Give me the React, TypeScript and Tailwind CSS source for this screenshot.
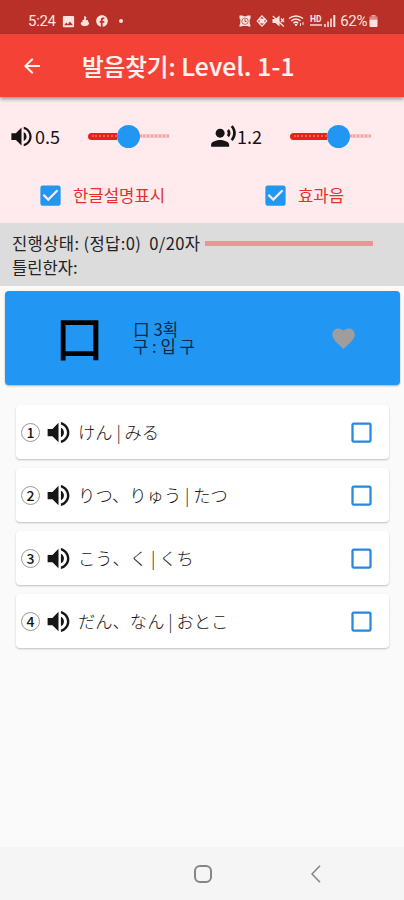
import {
  MdArrowBack,
  MdCheckBox,
  MdCheckBoxOutlineBlank,
  MdFacebook,
  MdFavorite,
  MdImage,
  MdRecordVoiceOver,
  MdVolumeUp,
} from 'react-icons/md';

const answers = [
  { id: 1, reading: 'けん | みる' },
  { id: 2, reading: 'りつ、りゅう | たつ' },
  { id: 3, reading: 'こう、く | くち' },
  { id: 4, reading: 'だん、なん | おとこ' },
];

function StatusBar() {
  return (
    <div className="flex h-[34px] items-center bg-[#b93029] pt-[8px] pr-[26px] pl-[28px] text-[#ffe3df]">
      <span className="w-[33px] font-['Roboto',sans-serif] text-[15px] leading-none tracking-[-0.3px]">5:24</span>
      <MdImage size={15} className="shrink-0" />
      <svg width="10" height="13" viewBox="0 0 11 13" fill="currentColor" className="ml-[4px]">
        <path d="M5 0.5C7.8 1.2 7 3.4 6.2 5C8.5 4.3 9.8 5.1 8.6 6.5C11 7.8 10 10.3 7.4 11.3C4.4 12.6 1.5 11.2 0.8 9C0.4 7.2 2.2 6.8 3.3 6.8C1.6 5.3 2.8 4.2 4.4 4.5C5.2 3.1 3.8 1.8 5 0.5Z" />
      </svg>
      <MdFacebook size={14} className="ml-[5px] shrink-0" />
      <span className="ml-[10px] size-[4px] rounded-full bg-current" />
      <div className="ml-auto flex items-center">
        <svg width="12" height="12" viewBox="0 0 12 12" fill="currentColor">
          <path d="M.5.5h3L4.500 1.300h3L8.500.5h3v3l-.8.800v4.500l.8 1.200v1.500H9.500L8.800 11H3.200l-.7.500h-2V10l.8-1.200V4.300L.5 3.500Z" />
          <circle cx="6" cy="6.200" r="3.200" fill="none" stroke="#b93029" strokeWidth=".7" />
          <path d="M6 4.200V6.500H7.500" fill="none" stroke="#b93029" strokeWidth=".9" />
        </svg>
        <svg width="12" height="12" viewBox="0 0 12 12" fill="none" stroke="currentColor" strokeWidth="1.2" className="ml-[5px]">
          <circle cx="6" cy="6" r="2" fill="currentColor" />
          <path d="M6 .8 10.8 6 6 11.2 1.2 6Z M3 3 9 9 M9 3 3 9" />
        </svg>
        <svg width="13" height="12" viewBox="0 0 13 12" fill="currentColor" className="ml-[4px]">
          <path d="M.5 4h3L7.500.5v11L3.500 8h-3Z" />
          <path d="M.8 1 11.800 11.500M9 3.500l3 3.500M12 3.500 9 7" fill="none" stroke="currentColor" strokeWidth="1.2" />
        </svg>
        <svg width="17" height="14" viewBox="0 0 17 14" fill="none" stroke="currentColor" strokeWidth="1.5" className="ml-[3px]">
          <path d="M1 4.5Q8 -.5 15 4.5M3.2 7Q8 3 12.5 7M5.5 9.3Q8 7 10.2 9.3" />
          <path d="M7 10.5h2L8 12ZM12.5 9v3M15 8v3" strokeWidth="1" />
        </svg>
        <span className="ml-[4px] flex w-[13px] flex-col items-center font-['Roboto',sans-serif] text-[8.5px] leading-[7px] font-bold">
          HD
          <span className="mt-[1px] h-[2px] w-[12px] bg-current opacity-70" />
        </span>
        <svg width="12" height="12" viewBox="0 0 12 12" fill="currentColor" className="ml-[2px]">
          <path d="M0 9h2v3H0ZM3 6.5h2V12H3ZM6 3.5h2V12H6Z" opacity=".75" />
          <path d="M9.3 0h2v12h-2Z" />
        </svg>
        <span className="ml-[4px] font-['Roboto',sans-serif] text-[15px] leading-none tracking-[-0.4px]">62%</span>
        <svg width="9" height="12" viewBox="0 0 9 12" fill="currentColor" className="ml-[2px]">
          <path d="M2.5 0h4v1.5h-4Z" opacity=".7" />
          <path d="M.5 1.5h8v3h-8Z" opacity=".5" />
          <path d="M.5 4.5h8V11a1 1 0 0 1-1 1h-6a1 1 0 0 1-1-1Z" />
        </svg>
      </div>
    </div>
  );
}

function AppBar() {
  return (
    <header className="relative flex h-[63px] items-center bg-[#f44336] pl-[20px] text-[#fff3f0] shadow-[0_2px_4px_rgba(0,0,0,0.4)]">
      <MdArrowBack size={24} className="shrink-0" />
      <h1 className="ml-[38px] text-[23.5px] leading-none font-medium whitespace-pre [-webkit-text-stroke:0.2px]">
        발음찾기:<span className="text-[24.6px] tracking-[0.2px]"> Level. 1-1</span>
      </h1>
    </header>
  );
}

function Slider({ value }: { value: number }) {
  return (
    <div className="flex w-[81px] items-center">
      <div className="flex h-[7px] items-center rounded-l-full bg-[#e8221b] pl-[4px]" style={{ width: value - 11 }}>
        <span className="w-full border-t-2 border-dotted border-[#f4625b]" />
      </div>
      <span className="size-[23px] shrink-0 rounded-full bg-[#2196f3]" />
      <div className="flex h-[4px] flex-1 items-center bg-[#fbc5c8]">
        <span className="w-full border-t-2 border-dotted border-[#f2a3a6]" />
      </div>
    </div>
  );
}

function Settings() {
  return (
    <section className="h-[126px] bg-[#ffebee]">
      <div className="flex h-[78px] items-center">
        <div className="flex w-[202px] items-center pl-[8px]">
          <MdVolumeUp size={27} className="text-[#181214]" />
          <span className="w-[53px] text-[18px] leading-none text-[#181214]">0.5</span>
          <Slider value={40} />
        </div>
        <div className="flex items-center pl-[8px]">
          <MdRecordVoiceOver size={27} className="text-[#181214]" />
          <span className="w-[53px] text-[18px] leading-none text-[#181214]">1.2</span>
          <Slider value={48} />
        </div>
      </div>
      <div className="flex h-[41px] items-center text-[16.7px] leading-none text-[#e5302c]">
        <div className="flex w-[225px] items-center pl-[37px]">
          <MdCheckBox size={27} className="mr-[9px] text-[#2196f3]" />
          한글설명표시
        </div>
        <div className="flex items-center pl-[37px]">
          <MdCheckBox size={27} className="mr-[9px] text-[#2196f3]" />
          효과음
        </div>
      </div>
    </section>
  );
}

function Progress() {
  return (
    <section className="h-[63px] bg-[#dcdcdc] pt-[8px] pl-[12px] text-[16.6px] leading-[24px] text-[#222]">
      <div className="flex items-center whitespace-pre">
        <span className="w-[193px] tracking-[0.35px]">진행상태: (정답:0)  0/20자</span>
        <span className="h-[5px] w-[168px] bg-[#ed9497]" />
      </div>
      <div>틀린한자:</div>
    </section>
  );
}

function KanjiCard() {
  return (
    <section className="mt-[5px] mr-[4px] ml-[5px] flex h-[94px] items-center rounded-[4px] bg-[#2196f3] text-black shadow-[0_1px_2px_rgba(0,0,0,0.3)]">
      <span className="mb-[6px] ml-[50px] w-[78px] font-['Noto_Sans_CJK_JP',sans-serif] text-[49px] leading-none font-medium">
        口
      </span>
      <div className="flex flex-1 flex-col text-[16.7px] leading-[17px] text-[#0b2a45]">
        <p>口 3획</p>
        <p>구 : 입 구</p>
      </div>
      <MdFavorite size={27} className="mr-[43px] text-[#9e9e9e]" />
    </section>
  );
}

function Answers() {
  return (
    <ul className="mt-[20px] flex flex-col gap-[9px] pr-[15px] pl-[16px]">
      {answers.map(({ id, reading }) => (
        <li
          key={id}
          className="flex h-[54px] items-center rounded-[4px] bg-white pr-[14px] pl-[5px] text-[#151515] shadow-[0_1px_2px_rgba(0,0,0,0.24)]"
        >
          <span className="flex size-[19px] items-center justify-center rounded-full border border-[#999] text-[14px] leading-none font-medium">
            {id}
          </span>
          <MdVolumeUp size={29} className="ml-[4px]" />
          <span className="ml-[5px] flex-1 font-['Noto_Sans_CJK_JP',sans-serif] text-[17.3px] leading-none font-light">
            {reading}
          </span>
          <MdCheckBoxOutlineBlank size={27} className="text-[#2688df]" />
        </li>
      ))}
    </ul>
  );
}

function NavigationBar() {
  return (
    <nav className="mt-auto flex h-[53px] items-center bg-[#f5f5f5] pl-[194px] text-[#858585]">
      <span className="size-[18px] rounded-[6px] border-2 border-current" />
      <svg width="10" height="18" viewBox="0 0 10 18" fill="none" stroke="currentColor" strokeWidth="1.6" className="ml-[99px]">
        <path d="M9 .8 1 9l8 8.2" />
      </svg>
    </nav>
  );
}

export default function App() {
  return (
    <div className="flex h-[900px] w-[404px] flex-col overflow-hidden bg-[#fafafa] font-['Noto_Sans_CJK_KR',sans-serif]">
      <StatusBar />
      <AppBar />
      <Settings />
      <Progress />
      <KanjiCard />
      <Answers />
      <NavigationBar />
    </div>
  );
}
